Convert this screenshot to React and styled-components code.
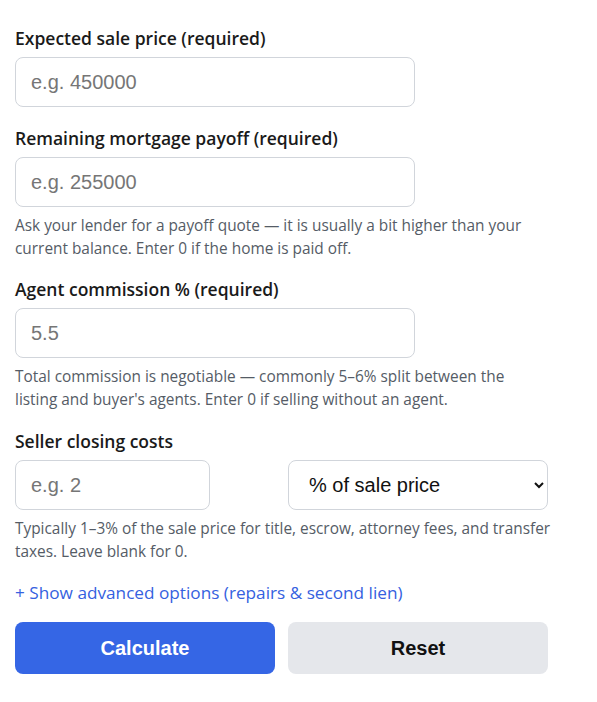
import React, { useState } from 'react'
import styled, { createGlobalStyle } from 'styled-components'

const GlobalStyle = createGlobalStyle`
  body {
    margin: 0;
    background: #ffffff;
  }
`

const App = () => {
  const [showAdvanced, setShowAdvanced] = useState(false)

  return (
    <>
      <GlobalStyle />
      <Form onSubmit={(e) => e.preventDefault()}>
        <Field $gap={19}>
          <Label>Expected sale price (required)</Label>
          <Input placeholder="e.g. 450000" />
        </Field>

        <Field>
          <Label>Remaining mortgage payoff (required)</Label>
          <Input placeholder="e.g. 255000" />
          <Hint>
            Ask your lender for a payoff quote — it is usually a bit higher than your
            <br />
            current balance. Enter 0 if the home is paid off.
          </Hint>
        </Field>

        <Field $gap={18}>
          <Label>Agent commission % (required)</Label>
          <Input placeholder="5.5" />
          <Hint>
            Total commission is negotiable — commonly 5–6% split between the
            <br />
            listing and buyer's agents. Enter 0 if selling without an agent.
          </Hint>
        </Field>

        <Field>
          <Label>Seller closing costs</Label>
          <Row>
            <Input placeholder="e.g. 2" $narrow />
            <Select defaultValue="pct">
              <option value="pct">% of sale price</option>
              <option value="usd">$ amount</option>
            </Select>
          </Row>
          <Hint>
            Typically 1–3% of the sale price for title, escrow, attorney fees, and transfer
            <br />
            taxes. Leave blank for 0.
          </Hint>
        </Field>

        <Toggle type="button" onClick={() => setShowAdvanced(!showAdvanced)}>
          {showAdvanced ? '− Hide' : '+ Show'} advanced options (repairs &amp; second lien)
        </Toggle>

        <Row>
          <Button type="submit" $primary>Calculate</Button>
          <Button type="reset">Reset</Button>
        </Row>
      </Form>
    </>
  )
}

const Form = styled.form`
  width: 532px;
  padding: 26px 15px 20px;
  display: flex;
  flex-direction: column;
  font-family: 'Open Sans', 'Noto Sans', sans-serif;
`

const Field = styled.div`
  display: flex;
  flex-direction: column;
  margin-bottom: ${(p) => p.$gap || 17}px;
`

const Label = styled.label`
  font-size: 17.5px;
  font-weight: 600;
  color: #1a1a1a;
  line-height: 24px;
  margin-bottom: 7px;
`

const Input = styled.input`
  box-sizing: border-box;
  width: ${(p) => (p.$narrow ? '195px' : '400px')};
  height: 50px;
  padding: 0 15px;
  border: 1px solid #d1d5db;
  border-radius: 8px;
  font-family: 'Liberation Sans', Arial, sans-serif;
  font-size: 20px;
  color: #1a1a1a;
  background: #fff;
  outline: none;
  &::placeholder {
    color: #767676;
  }
`

const Row = styled.div`
  display: grid;
  grid-template-columns: 260px 260px;
  column-gap: 13px;
  align-items: center;
`

const Select = styled.select`
  box-sizing: border-box;
  width: 260px;
  height: 50px;
  padding: 0 16px;
  border: 1px solid #d1d5db;
  border-radius: 8px;
  font-family: 'Liberation Sans', Arial, sans-serif;
  font-size: 20px;
  color: #111;
  background: #fff;
`

const Hint = styled.p`
  margin: 7px -30px 0 0;
  font-size: 15.4px;
  line-height: 23px;
  color: #555c66;
`

const Toggle = styled.button`
  align-self: flex-start;
  background: none;
  border: 0;
  padding: 0;
  margin: 0 0 16px;
  font-family: 'Open Sans', 'Noto Sans', sans-serif;
  font-size: 17.2px;
  font-weight: 500;
  line-height: 26px;
  color: #3561e0;
  cursor: pointer;
`

const Button = styled.button`
  height: 52px;
  border: 0;
  border-radius: 8px;
  font-family: 'Liberation Sans', Arial, sans-serif;
  font-size: 20px;
  font-weight: 700;
  color: ${(p) => (p.$primary ? '#ffffff' : '#111111')};
  background: ${(p) => (p.$primary ? '#3566e5' : '#e5e7eb')};
  cursor: pointer;
`

export default App
